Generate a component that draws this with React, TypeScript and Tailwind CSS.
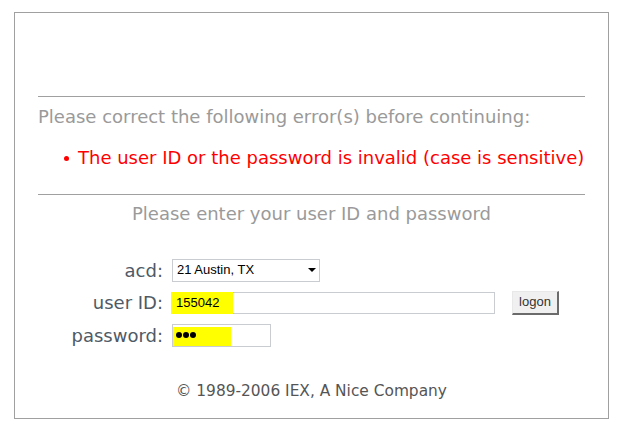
import React from 'react';

const FIELD_FONT = "font-['Liberation_Sans',Arial,sans-serif]";

export default function App() {
  return (
    <div className="h-[430px] w-[619px] bg-white pl-[14px] pt-[12px] font-['DejaVu_Sans',Verdana,sans-serif]">
      <div className="flex h-[407px] w-[595px] flex-col border border-[#a0a0a0] px-[23px]">
        {/* empty header area */}
        <div className="h-[83px] shrink-0" />
        <div className="h-px bg-[#a0a0a0]" />

        {/* error block */}
        <div className="pt-[9px] text-[18px] leading-[22px] text-[#9a9a9a]">
          Please correct the following error(s) before continuing:
        </div>
        <div className="flex items-center pt-[19px] pl-[26px] text-[18px] leading-[22px] text-[#ff0000]">
          <span className="mr-[9px] h-[5px] w-[5px] rounded-full bg-[#ff0000]" />
          <span>The user ID or the password is invalid (case is sensitive)</span>
        </div>
        <div className="mt-[25px] h-px bg-[#a0a0a0]" />

        <div className="pt-[8px] text-center text-[18px] leading-[22px] text-[#9a9a9a]">
          Please enter your user ID and password
        </div>

        {/* logon form */}
        <div className="mt-[29px] flex flex-col">
          <div className="flex h-[32px] items-center">
            <div className="w-[125px] text-right text-[18px] text-[#4f5a66]">acd:</div>
            <div className={`ml-[9px] flex h-[23px] w-[148px] items-center justify-between border border-[#c9ccd0] pl-[4px] pr-[3px] text-[13px] text-black ${FIELD_FONT}`}>
              <span>21 Austin, TX</span>
              <svg width="8" height="4" viewBox="0 0 8 4">
                <path d="M0 0h8L4 4z" fill="#000" />
              </svg>
            </div>
          </div>
          <div className="flex h-[33px] items-center">
            <div className="w-[125px] text-right text-[18px] text-[#4f5a66]">user ID:</div>
            <div className={`relative ml-[9px] flex h-[22px] w-[323px] items-center border border-[#c9ccd0] pl-[3px] text-[13px] text-black ${FIELD_FONT}`}>
              <span className="absolute left-[-2px] top-[-1px] h-[22px] w-[62px] bg-[#ffff00]" />
              <span className="relative">155042</span>
            </div>
            <button className={`ml-[17px] h-[24px] w-[47px] border border-t-[#e8e8e8] border-l-[#e8e8e8] border-r-[2px] border-b-[2px] border-r-[#6b6b6b] border-b-[#6b6b6b] bg-[#f0f0f0] pb-[1px] text-[13px] text-[#333] ${FIELD_FONT}`}>
              logon
            </button>
          </div>
          <div className="flex h-[32px] items-center">
            <div className="w-[125px] text-right text-[18px] text-[#4f5a66]">password:</div>
            <div className="relative ml-[9px] flex h-[23px] w-[99px] items-center gap-[1px] border border-[#c9ccd0] pl-[3px]">
              <span className="absolute left-0 top-[2px] h-[19px] w-[58px] bg-[#ffff00]" />
              <span className="relative h-[6px] w-[6px] rounded-full bg-black" />
              <span className="relative h-[6px] w-[6px] rounded-full bg-black" />
              <span className="relative h-[6px] w-[6px] rounded-full bg-black" />
            </div>
          </div>
        </div>

        <div className="mt-[30px] text-center text-[15.4px] leading-[20px] text-[#555]">
          © 1989-2006 IEX, A Nice Company
        </div>
      </div>
    </div>
  );
}
